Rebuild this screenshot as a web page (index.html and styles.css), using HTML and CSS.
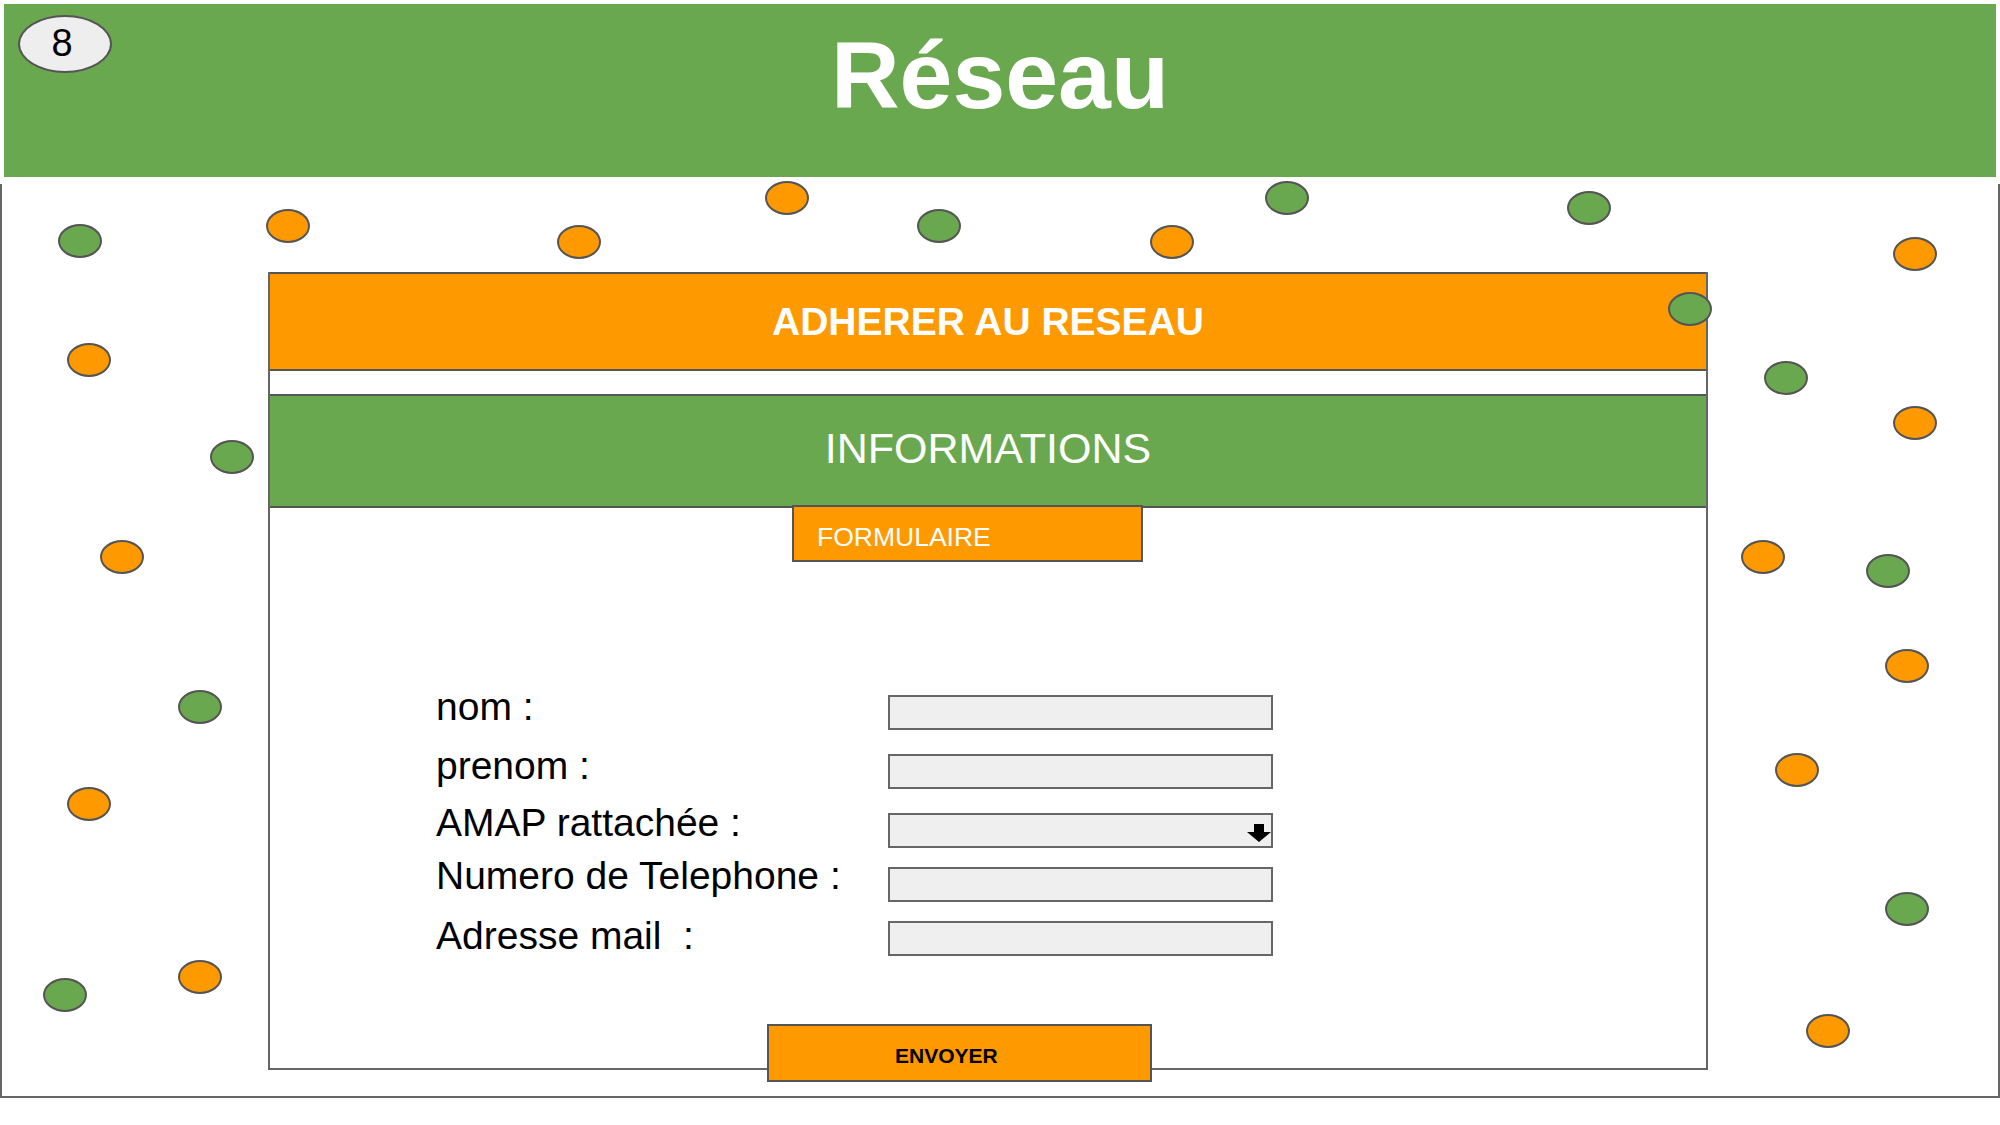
FILE: index.html
```html
<!DOCTYPE html>
<html lang="fr">
<head>
<meta charset="utf-8">
<title>Réseau</title>
<link rel="stylesheet" href="styles.css">
</head>
<body>
<header class="header">
  <div class="badge">8</div>
  <h1 class="title">Réseau</h1>
</header>
<main class="stage">
  <section class="panel">
    <div class="band band-orange">ADHERER AU RESEAU</div>
    <div class="band band-green">INFORMATIONS</div>
    <div class="tab">FORMULAIRE</div>
    <form class="form">
      <label class="label">nom :</label>
      <div class="field"></div>
      <label class="label">prenom :</label>
      <div class="field"></div>
      <label class="label">AMAP rattachée :</label>
      <div class="field select">
        <svg class="arrow" width="24" height="18" viewBox="0 0 24 18"><polygon points="7,0 17,0 17,8 24,8 12,18 0,8 7,8" fill="#000"/></svg>
      </div>
      <label class="label">Numero de Telephone :</label>
      <div class="field"></div>
      <label class="label">Adresse mail&nbsp; :</label>
      <div class="field"></div>
    </form>
    <div class="send">ENVOYER</div>
  </section>
  <div class="dots">
    <span class="dot g" style="left:56px;top:40px"></span>
    <span class="dot g" style="left:915px;top:25px"></span>
    <span class="dot g" style="left:1263px;top:-3px"></span>
    <span class="dot g" style="left:1565px;top:7px"></span>
    <span class="dot g" style="left:1666px;top:108px"></span>
    <span class="dot g" style="left:208px;top:256px"></span>
    <span class="dot g" style="left:1762px;top:177px"></span>
    <span class="dot g" style="left:1864px;top:370px"></span>
    <span class="dot g" style="left:176px;top:506px"></span>
    <span class="dot g" style="left:1883px;top:708px"></span>
    <span class="dot g" style="left:41px;top:794px"></span>
    <span class="dot o" style="left:264px;top:25px"></span>
    <span class="dot o" style="left:555px;top:41px"></span>
    <span class="dot o" style="left:763px;top:-3px"></span>
    <span class="dot o" style="left:1148px;top:41px"></span>
    <span class="dot o" style="left:1891px;top:53px"></span>
    <span class="dot o" style="left:65px;top:159px"></span>
    <span class="dot o" style="left:1891px;top:222px"></span>
    <span class="dot o" style="left:98px;top:356px"></span>
    <span class="dot o" style="left:1739px;top:356px"></span>
    <span class="dot o" style="left:1883px;top:465px"></span>
    <span class="dot o" style="left:1773px;top:569px"></span>
    <span class="dot o" style="left:65px;top:603px"></span>
    <span class="dot o" style="left:176px;top:776px"></span>
    <span class="dot o" style="left:1804px;top:830px"></span>
  </div>
</main>
</body>
</html>
```
FILE: styles.css
```css
* { box-sizing: border-box; }
html, body {
  margin: 0;
  padding: 0;
  background: #fff;
  width: 2000px;
  height: 1125px;
  overflow: hidden;
  font-family: "Liberation Sans", Arial, sans-serif;
}
.header {
  position: relative;
  margin: 4px 4px 0;
  height: 173px;
  background: #6aa84f;
  padding-top: 24px;
}
.badge {
  position: absolute;
  left: 14px;
  top: 11px;
  width: 94px;
  height: 58px;
  border: 2px solid #555;
  border-radius: 50%;
  background: #eeeeee;
  color: #000;
  font-size: 38px;
  line-height: 52px;
  text-align: center;
  padding-right: 6px;
}
.title {
  margin: 0;
  text-align: center;
  color: #fff;
  font-size: 95px;
  line-height: 95px;
  font-weight: bold;
}
.stage {
  position: relative;
  margin-top: 7px;
  width: 2000px;
  height: 914px;
  border: 2px solid #666;
  border-top: none;
  padding: 88px 0 0 266px;
}
.panel {
  width: 1440px;
  border: 2px solid #666;
  border-top: none;
}
.band {
  display: flex;
  align-items: center;
  justify-content: center;
  border-top: 2px solid #555;
  border-bottom: 2px solid #555;
  color: #fff;
}
.band-orange {
  height: 99px;
  background: #ff9900;
  font-size: 39px;
  font-weight: bold;
}
.band-green {
  margin-top: 23px;
  height: 114px;
  background: #6aa84f;
  font-size: 43px;
  padding-bottom: 6px;
}
.tab {
  position: relative;
  margin: -3px 0 0 522px;
  width: 351px;
  height: 57px;
  border: 2px solid #555;
  background: #ff9900;
  color: #fff;
  font-size: 26.5px;
  display: flex;
  align-items: center;
  padding: 8px 0 0 23px;
}
.form {
  margin: 133px 0 0;
  padding-left: 166px;
  display: grid;
  grid-template-columns: 452px 385px;
  grid-template-rows: 59px 59px 54px 54px 35px;
}
.label {
  font-size: 39px;
  line-height: 35px;
  height: 35px;
  margin-top: -6px;
  color: #000;
  white-space: pre;
}
.label:nth-of-type(3) { margin-top: -8px; }
.label:nth-of-type(4) { margin-top: -9px; }
.label:nth-of-type(5) { margin-top: -3px; }
.field {
  position: relative;
  width: 385px;
  height: 35px;
  border: 2px solid #666;
  background: #efefef;
}
.arrow {
  position: absolute;
  right: 0;
  top: 9px;
}
.send {
  position: relative;
  margin: 68px 0 -14px 497px;
  width: 385px;
  height: 58px;
  border: 2px solid #555;
  background: #ff9900;
  color: #000;
  font-size: 21px;
  font-weight: bold;
  display: flex;
  align-items: center;
  padding: 6px 0 0 126px;
}
.dots {
  position: absolute;
  inset: 0;
  pointer-events: none;
}
.dot {
  position: absolute;
  width: 44px;
  height: 34px;
  border: 2px solid #555;
  border-radius: 50%;
}
.dot.g { background: #6aa84f; }
.dot.o { background: #ff9900; }
```
